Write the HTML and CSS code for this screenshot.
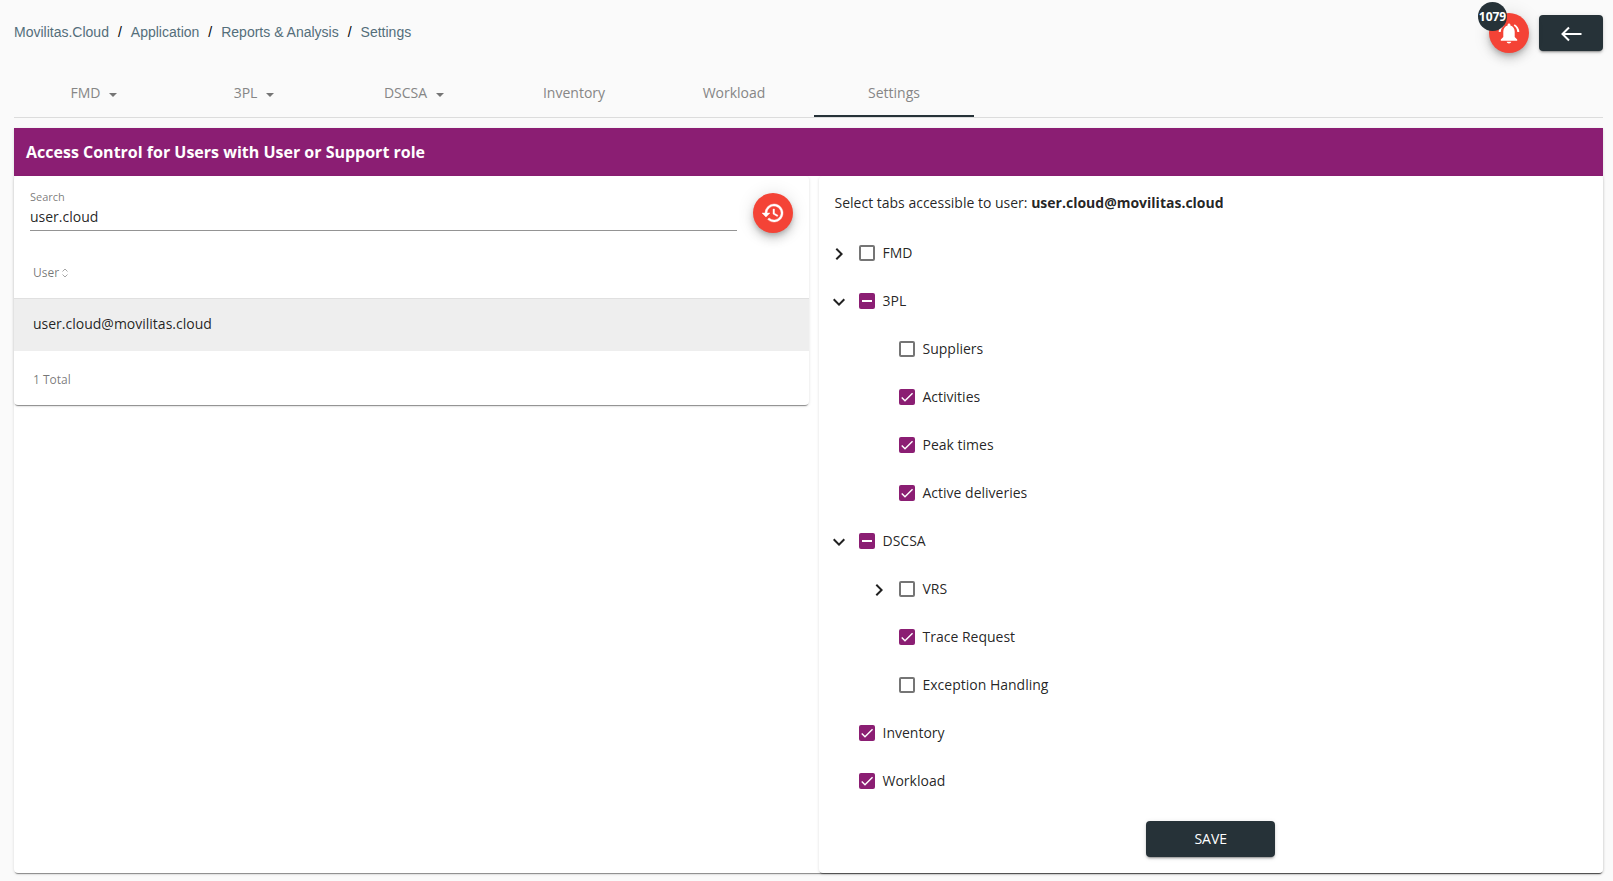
FILE: index.html
```html
<!DOCTYPE html>
<html lang="en">
<head>
<meta charset="utf-8">
<title>Settings - Movilitas.Cloud</title>
<link rel="stylesheet" href="styles.css">
</head>
<body>
<header class="topbar">
  <nav class="breadcrumb" aria-label="Breadcrumb">
    <a href="#">Movilitas.Cloud</a><span>/</span><a href="#">Application</a><span>/</span><a href="#">Reports &amp; Analysis</a><span>/</span><a href="#">Settings</a>
  </nav>
  <div class="actions">
    <button class="fab" type="button" aria-label="Notifications">
      <svg viewBox="0 0 24 24" width="24" height="24"><path fill="currentColor" d="M12 2.500c-.8 0-1.400.6-1.400 1.400v.7C8 5.300 6.300 7.700 6.300 10.500V16L3.800 18.500v1.200h16.400v-1.200L17.700 16v-5.500c0-2.800-1.700-5.200-4.300-5.900v-.7c0-.8-.6-1.400-1.400-1.400zM9.700 20.800h4.600c-.2 1.100-1.200 1.700-2.300 1.700s-2.100-.6-2.300-1.700z"/><path fill="none" stroke="currentColor" stroke-width="2" d="M6.800 4C4.400 5.400 2.900 7.900 2.700 11M17.200 4c2.400 1.400 3.900 3.900 4.100 7"/></svg>
      <span class="badge">1079</span>
    </button>
    <button class="btn btn-back" type="button" aria-label="Back">
      <svg viewBox="0 0 24 24" width="24" height="24" fill="none" stroke="currentColor" stroke-width="2"><path d="M22.500 12H4M10 5.500L3.500 12L10 18.500"/></svg>
    </button>
  </div>
</header>

<nav class="tabs" aria-label="Reports">
  <a class="tab" href="#">FMD<i class="caret"></i></a>
  <a class="tab" href="#">3PL<i class="caret"></i></a>
  <a class="tab" href="#">DSCSA<i class="caret"></i></a>
  <a class="tab" href="#">Inventory</a>
  <a class="tab" href="#">Workload</a>
  <a class="tab active" href="#" aria-current="page">Settings</a>
</nav>

<main class="card page">
  <h1 class="title">Access Control for Users with User or Support role</h1>
  <div class="columns">
    <section class="card users">
      <div class="search">
        <div class="field">
          <label for="search">Search</label>
          <input id="search" type="text" value="user.cloud">
        </div>
        <button class="fab" type="button" aria-label="Reset search">
          <svg viewBox="0 0 24 24" width="24" height="24" fill="currentColor" stroke="currentColor" stroke-width="0.400"><path d="M13 3a9 9 0 0 0-9 9H1l3.890 3.890.070.140L9 12H6a7 7 0 1 1 2.060 4.940l-1.420 1.420A9 9 0 1 0 13 3zm-1 5v5l4.280 2.540.720-1.210-3.500-2.080V8z"/></svg>
        </button>
      </div>
      <table class="table">
        <thead>
          <tr><th scope="col">User <svg class="sort" viewBox="0 0 6 10" width="6" height="10" fill="none" stroke="currentColor"><path d="M0.500 3.500L3 1L5.500 3.500M0.500 6.500L3 9L5.500 6.500"/></svg></th></tr>
        </thead>
        <tbody>
          <tr><td>user.cloud@movilitas.cloud</td></tr>
        </tbody>
        <tfoot>
          <tr><td>1 Total</td></tr>
        </tfoot>
      </table>
    </section>

    <section class="card access">
      <p class="intro">Select tabs accessible to user: <strong>user.cloud@movilitas.cloud</strong></p>
      <ul class="tree">
        <li>
          <div class="node"><button class="toggle" type="button" aria-label="Expand FMD"><svg viewBox="0 0 24 24" width="24" height="24"><path d="M10 6L8.590 7.410 13.170 12l-4.580 4.590L10 18l6-6z"/></svg></button><label><input type="checkbox">FMD</label></div>
        </li>
        <li>
          <div class="node"><button class="toggle" type="button" aria-label="Collapse 3PL"><svg viewBox="0 0 24 24" width="24" height="24"><path d="M16.590 8.590L12 13.170 7.410 8.590 6 10l6 6 6-6z"/></svg></button><label><input type="checkbox" class="partial">3PL</label></div>
          <ul>
            <li class="node leaf"><label><input type="checkbox">Suppliers</label></li>
            <li class="node leaf"><label><input type="checkbox" checked>Activities</label></li>
            <li class="node leaf"><label><input type="checkbox" checked>Peak times</label></li>
            <li class="node leaf"><label><input type="checkbox" checked>Active deliveries</label></li>
          </ul>
        </li>
        <li>
          <div class="node"><button class="toggle" type="button" aria-label="Collapse DSCSA"><svg viewBox="0 0 24 24" width="24" height="24"><path d="M16.590 8.590L12 13.170 7.410 8.590 6 10l6 6 6-6z"/></svg></button><label><input type="checkbox" class="partial">DSCSA</label></div>
          <ul>
            <li class="node"><button class="toggle" type="button" aria-label="Expand VRS"><svg viewBox="0 0 24 24" width="24" height="24"><path d="M10 6L8.590 7.410 13.170 12l-4.580 4.590L10 18l6-6z"/></svg></button><label><input type="checkbox">VRS</label></li>
            <li class="node leaf"><label><input type="checkbox" checked>Trace Request</label></li>
            <li class="node leaf"><label><input type="checkbox">Exception Handling</label></li>
          </ul>
        </li>
        <li class="node leaf"><label><input type="checkbox" checked>Inventory</label></li>
        <li class="node leaf"><label><input type="checkbox" checked>Workload</label></li>
      </ul>
      <button class="btn btn-save" type="button">SAVE</button>
    </section>
  </div>
</main>
<script src="script.js"></script>
</body>
</html>
```
FILE: script.js
```js
// A parent with only some children ticked shows the mixed state.
document.querySelectorAll(".partial").forEach(function (box) {
  box.indeterminate = true;
});
```
FILE: styles.css
```css
:root {
  --purple: #8b1e73;
  --dark: #263238;
  --red: #f44336;
  --text: rgba(0, 0, 0, 0.87);
  --muted: rgba(0, 0, 0, 0.54);
}

* {
  box-sizing: border-box;
}

body {
  margin: 0;
  padding: 0 10px 8px 14px;
  background: #fafafa;
  color: var(--text);
  font: 14px/20px "Open Sans", "Noto Sans", sans-serif;
}

a {
  color: inherit;
  text-decoration: none;
}

button,
input {
  font: inherit;
}

button {
  border: 0;
  padding: 0;
  cursor: pointer;
}

svg {
  display: block;
}

.card {
  background: #fff;
  border-radius: 4px;
  box-shadow: 0 2px 1px -1px rgba(0, 0, 0, 0.4), 0 1px 3px rgba(0, 0, 0, 0.14);
}

/* Top bar */
.topbar {
  display: flex;
  justify-content: space-between;
  align-items: flex-start;
  height: 69px;
  padding-top: 13px;
}

.breadcrumb {
  display: flex;
  gap: 9px;
  padding-top: 9px;
  color: #000;
  font-family: "Liberation Sans", Arial, sans-serif;
}

.breadcrumb a {
  color: #546e7a;
}

.actions {
  display: flex;
  align-items: center;
  gap: 10px;
}

.fab {
  position: relative;
  display: grid;
  place-items: center;
  flex: none;
  width: 40px;
  height: 40px;
  border-radius: 50%;
  background: var(--red);
  color: #fff;
  box-shadow: 0 3px 5px -1px rgba(0, 0, 0, 0.2), 0 6px 10px rgba(0, 0, 0, 0.14), 0 1px 18px rgba(0, 0, 0, 0.12);
}

.badge {
  position: absolute;
  top: -11px;
  left: -11px;
  width: 29px;
  border-radius: 50%;
  background: var(--dark);
  font-size: 12px;
  font-weight: 700;
  line-height: 29px;
  text-align: center;
}

.btn {
  display: grid;
  place-items: center;
  height: 36px;
  border-radius: 4px;
  background: var(--dark);
  color: #fff;
  box-shadow: 0 3px 1px -2px rgba(0, 0, 0, 0.2), 0 2px 2px rgba(0, 0, 0, 0.14), 0 1px 5px rgba(0, 0, 0, 0.12);
}

.btn-back {
  width: 64px;
  padding-top: 2px;
}

/* Tabs */
.tabs {
  display: flex;
  margin-bottom: 10px;
  border-bottom: 1px solid #dcdcdc;
}

.tab {
  display: flex;
  justify-content: center;
  align-items: center;
  width: 160px;
  height: 48px;
  padding-top: 2px;
  border-bottom: 2px solid transparent;
  color: #868686;
}

.tab.active {
  border-color: var(--dark);
}

.caret {
  margin: 4px 0 0 9px;
  border: 4px solid transparent;
  border-top-color: #757575;
  border-bottom: 0;
}

/* Page card */
.title {
  margin: 0;
  padding: 0 12px;
  background: var(--purple);
  color: #fff;
  font-size: 16px;
  line-height: 48px;
}

.page {
  border-radius: 0 0 4px 4px;
}

.columns {
  display: grid;
  grid-template-columns: 1fr calc(50% - 10px);
  gap: 10px;
  align-items: start;
}

.search {
  display: flex;
  align-items: flex-start;
  gap: 16px;
  padding: 17px 16px 0;
}

.field {
  flex: 1;
  display: flex;
  flex-direction: column;
  height: 38px;
  border-bottom: 1px solid #949494;
}

.field label {
  margin-top: -4px;
  color: var(--muted);
  font-size: 11px;
  line-height: 16px;
}

.field input {
  width: 100%;
  height: 22px;
  padding: 0;
  border: 0;
  outline: 0;
  background: none;
  color: var(--text);
}

.table {
  width: 100%;
  border-spacing: 0;
  text-align: left;
}

.table th,
.table td {
  padding: 0 19px;
}

.table th {
  height: 66px;
  padding-top: 14px;
  border-bottom: 1px solid #e0e0e0;
  color: var(--muted);
  font-size: 12px;
  font-weight: 400;
}

.table tbody td {
  height: 52px;
  padding-bottom: 2px;
  background: #eee;
}

.table tfoot td {
  height: 54px;
  padding-top: 4px;
  color: var(--muted);
  font-size: 12px;
}

.sort {
  display: inline-block;
  vertical-align: middle;
  color: #a6a6a6;
}

/* Access tree */
.access {
  padding-bottom: 16px;
}

.intro {
  margin: 0;
  padding: 17px 16px 16px;
}

.tree,
.tree ul {
  margin: 0;
  padding: 0;
  list-style: none;
}

.tree ul {
  padding-left: 40px;
}

.node {
  display: flex;
  align-items: center;
  height: 48px;
}

.leaf {
  padding-left: 40px;
}

.toggle {
  display: grid;
  place-items: center;
  width: 40px;
  height: 40px;
  padding-top: 2px;
  background: none;
}

.toggle path {
  fill: #212121;
}

.node label {
  display: flex;
  align-items: center;
  gap: 8px;
}

.node input {
  appearance: none;
  width: 16px;
  height: 16px;
  margin: 0;
  border: 2px solid #757575;
  border-radius: 2px;
}

.node input:checked,
.node input:indeterminate {
  border: 0;
  background: var(--purple) center / 16px no-repeat;
}

.node input:checked {
  background-image: url("data:image/svg+xml,%3Csvg xmlns='http://www.w3.org/2000/svg' viewBox='0 0 24 24'%3E%3Cpath d='M4.100 12.700L9 17.600L20.300 6.300' fill='none' stroke='white' stroke-width='2.130'/%3E%3C/svg%3E");
}

.node input:indeterminate {
  background-image: url("data:image/svg+xml,%3Csvg xmlns='http://www.w3.org/2000/svg' viewBox='0 0 16 16'%3E%3Cpath d='M3 8H13' stroke='white' stroke-width='2'/%3E%3C/svg%3E");
}

.btn-save {
  width: 129px;
  margin: 16px auto 0;
  font-weight: 500;
}
```
